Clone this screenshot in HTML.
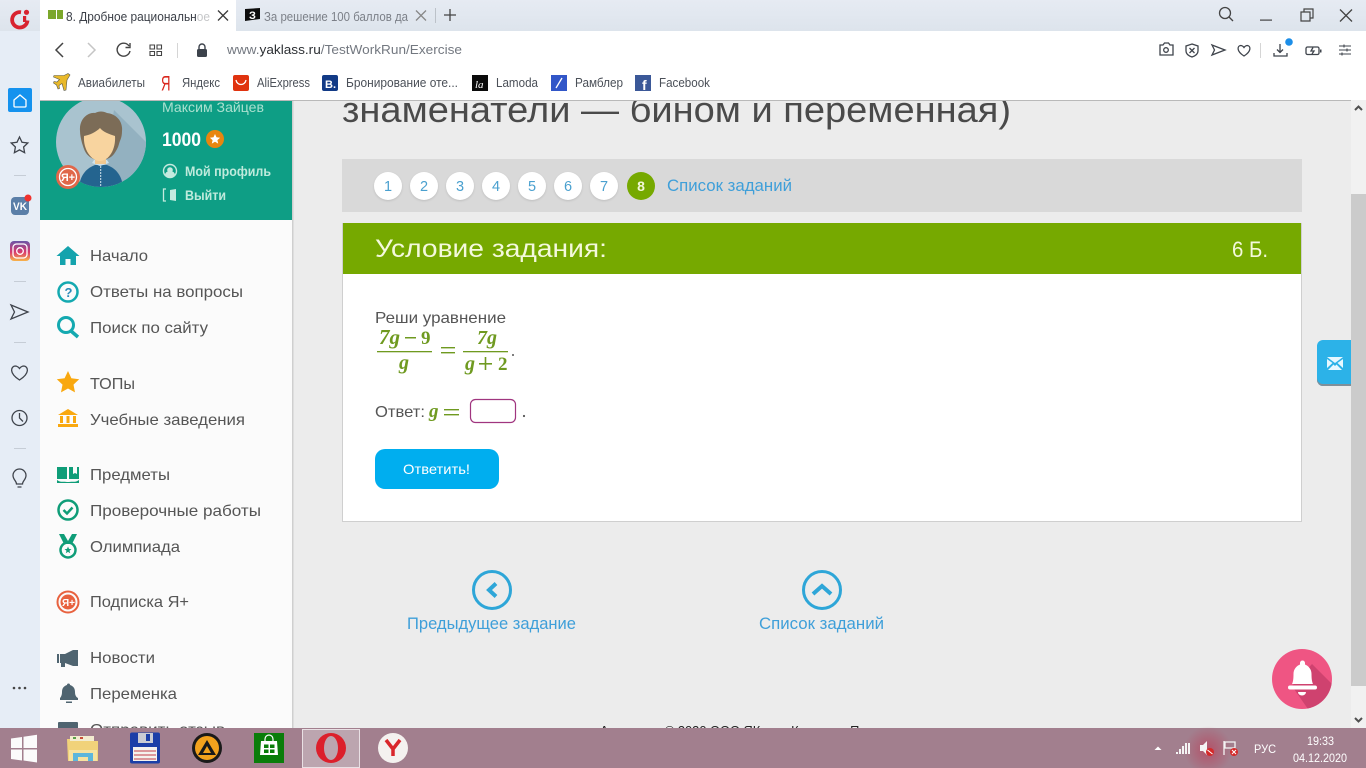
<!DOCTYPE html>
<html lang="ru"><head><meta charset="utf-8"><title>ЯКласс</title>
<style>
html,body{margin:0;padding:0;width:1366px;height:768px;overflow:hidden;background:#ececec}
svg{display:block}
text{font-family:"Liberation Sans","Noto Sans CJK SC",sans-serif;fill:#555;font-size:16px;white-space:pre}
.m{font-family:"Liberation Serif",serif;font-style:italic;font-weight:bold;fill:#6f9a20;font-size:20px}
.mu{font-family:"Liberation Serif",serif;font-weight:bold;fill:#6f9a20;font-size:19px}
.c{font-size:12.5px;fill:#4b5058}
.t{font-size:12px;fill:#fff}
.n{font-size:14.5px;fill:#4aa0cf;text-anchor:middle}
.ln{fill:none;stroke:#3f444c;stroke-width:1.3}
</style></head><body>
<svg width="1366" height="768" viewBox="0 0 1366 768" xmlns="http://www.w3.org/2000/svg">
<defs>
<linearGradient id="tb" x1="0" y1="0" x2="0" y2="1"><stop offset="0" stop-color="#e6ebf3"/><stop offset="1" stop-color="#dde4ec"/></linearGradient>
<linearGradient id="ig" x1="0" y1="0" x2="0" y2="1"><stop offset="0" stop-color="#6a56a8"/><stop offset=".55" stop-color="#d8386e"/><stop offset="1" stop-color="#f8b44a"/></linearGradient>
<radialGradient id="glow"><stop offset="0" stop-color="#b8435c" stop-opacity=".75"/><stop offset="1" stop-color="#b8435c" stop-opacity="0"/></radialGradient>
<clipPath id="av"><circle cx="101" cy="142" r="45"/></clipPath>
<clipPath id="bell"><circle cx="1302" cy="679" r="30"/></clipPath>
</defs>

<!-- page -->
<rect x="40" y="100" width="1326" height="628" fill="#ececec"/>
<text x="342" y="122" textLength="669" lengthAdjust="spacingAndGlyphs" style="font-size:36px;fill:#4a4a4a">знаменатели — бином и переменная)</text>

<!-- number strip -->
<rect x="342" y="159" width="960" height="53" fill="#d9d9d9"/>
<g fill="#fff" style="filter:drop-shadow(0 1px 1px rgba(0,0,0,.12))">
<circle cx="388" cy="186" r="14"/><circle cx="424" cy="186" r="14"/><circle cx="460" cy="186" r="14"/><circle cx="496" cy="186" r="14"/><circle cx="532" cy="186" r="14"/><circle cx="568" cy="186" r="14"/><circle cx="604" cy="186" r="14"/>
</g>
<circle cx="641" cy="186" r="14" fill="#76a900"/>
<text class="n" x="388" y="191">1</text><text class="n" x="424" y="191">2</text><text class="n" x="460" y="191">3</text><text class="n" x="496" y="191">4</text><text class="n" x="532" y="191">5</text><text class="n" x="568" y="191">6</text><text class="n" x="604" y="191">7</text>
<text class="n" x="641" y="191" style="fill:#f2f8d8;font-weight:bold;font-size:14px">8</text>
<text x="667" y="191" textLength="125" lengthAdjust="spacingAndGlyphs" style="fill:#3f9fd9;font-size:16.5px">Список заданий</text>

<!-- card -->
<rect x="342.500" y="223.500" width="959" height="298" fill="#fff" stroke="#cfcfcf"/>
<rect x="343" y="223" width="958" height="51" fill="#76a900"/>
<text x="375" y="257" textLength="232" lengthAdjust="spacingAndGlyphs" style="font-size:25px;fill:#f4f9dc">Условие задания:</text>
<text x="1232" y="257" textLength="36" lengthAdjust="spacingAndGlyphs" style="font-size:22px;fill:#f4f9dc">6 Б.</text>
<text x="375" y="323" textLength="131" lengthAdjust="spacingAndGlyphs" style="fill:#555">Реши уравнение</text>

<text class="m" x="379" y="344" style="font-size:21px">7g</text>
<rect x="405" y="337" width="11" height="1.500" fill="#6f9a20"/>
<text class="mu" x="421" y="344">9</text>
<rect x="377" y="351" width="55" height="1.300" fill="#6f9a20"/>
<text class="m" x="399" y="369">g</text>
<rect x="441" y="347" width="14" height="1.400" fill="#6f9a20"/><rect x="441" y="352" width="14" height="1.400" fill="#6f9a20"/>
<text class="m" x="477" y="344" style="font-size:20px">7g</text>
<rect x="463" y="351" width="45" height="1.300" fill="#6f9a20"/>
<text class="m" x="465" y="370">g</text>
<rect x="479" y="363" width="13" height="1.600" fill="#6f9a20"/><rect x="484.700" y="357" width="1.600" height="13" fill="#6f9a20"/>
<text class="mu" x="498" y="370">2</text>
<circle cx="513" cy="355" r="1" fill="#555"/>

<text x="375" y="417" textLength="50" lengthAdjust="spacingAndGlyphs">Ответ:</text>
<text class="m" x="429" y="417" style="font-size:19px">g</text>
<rect x="444" y="409" width="15" height="1.400" fill="#6f9a20"/><rect x="444" y="414" width="15" height="1.400" fill="#6f9a20"/>
<rect x="470.500" y="399.500" width="45" height="23" rx="5" fill="#fff" stroke="#a0357f" stroke-width="1.200"/>
<circle cx="524" cy="416" r="1.100" fill="#555"/>

<rect x="375" y="449" width="124" height="40" rx="10" fill="#00aeef"/>
<text x="403" y="474" textLength="67" lengthAdjust="spacingAndGlyphs" style="font-size:14px;fill:#fff">Ответить!</text>

<!-- prev/list -->
<circle cx="492" cy="590" r="18.500" fill="none" stroke="#2ea6d8" stroke-width="3"/>
<path d="M496 583.500l-7 6.500 7 6.500" fill="none" stroke="#2ea6d8" stroke-width="4"/>
<text x="407" y="629" textLength="169" lengthAdjust="spacingAndGlyphs" style="fill:#3f9fd9;font-size:16.5px">Предыдущее задание</text>
<circle cx="822" cy="590" r="18.500" fill="none" stroke="#2ea6d8" stroke-width="3"/>
<path d="M813 594l9-8 9 8" fill="none" stroke="#2ea6d8" stroke-width="4"/>
<text x="759" y="629" textLength="125" lengthAdjust="spacingAndGlyphs" style="fill:#3f9fd9;font-size:16.5px">Список заданий</text>
<text x="600" y="735" textLength="300" lengthAdjust="spacingAndGlyphs" style="fill:#222;font-size:13px">Авторские © 2020 ООО ЯКласс Контакты Пользов</text>

<!-- scrollbar -->
<rect x="1351" y="100" width="15" height="628" fill="#f1f1f1"/>
<rect x="1351" y="194" width="15" height="492" fill="#cbcbcb"/>
<path d="M1355 110l3.500-3.500 3.500 3.500M1355 718l3.500 3.500 3.500-3.500" fill="none" stroke="#505050" stroke-width="2"/>

<!-- mail -->
<path d="M1323 340h28v46h-28a6 6 0 0 1-6-6v-34a6 6 0 0 1 6-6z" fill="#2cb2e8"/>
<path d="M1317 378v2a6 6 0 0 0 6 6h28v-2h-28a6 6 0 0 1-6-6z" fill="#7f8f99"/>
<path d="M1327 357h16l-8 6zM1327 359l5.500 4-5.500 5zM1343 359l-5.500 4 5.500 5zM1328 370l5.500-5.500 1.500 1.500 1.500-1.500 5.500 5.500z" fill="#e8f8ff"/>

<!-- bell -->
<circle cx="1302" cy="679" r="30" fill="#ef5583"/>
<path d="M1292 686l20-22 24 24-16 24-10 0z" fill="#c23a66" opacity=".7" clip-path="url(#bell)"/>
<path d="M1292 684c1-2 1.500-5 1.500-10 0-5 3-8 6.500-9.500v-1.500a2.500 2.500 0 0 1 5 0v1.500c3.500 1.500 6.500 4.500 6.500 9.500 0 5 .5 8 1.500 10z" fill="#fff"/>
<rect x="1288" y="685.500" width="29" height="4" rx="2" fill="#fff"/>
<path d="M1298 692h8a4 3.500 0 0 1-8 0z" fill="#fff"/>

<!-- left panel -->
<rect x="40" y="100" width="252" height="628" fill="#fbfbfb"/>
<rect x="292" y="100" width="1.500" height="628" fill="#cfcfcf"/>
<rect x="40" y="100" width="252" height="120" fill="#0e9e85"/>
<circle cx="101" cy="142" r="45" fill="#a9c3cf"/>
<g clip-path="url(#av)">
<path d="M114 110l40 40-26 44-28-4z" fill="#93b1c0"/>
<path d="M79 190c0-15 8-22 16-25h12c8 3 16 10 16 25z" fill="#24648f"/>
<path d="M100.700 163v27" stroke="#d3e4ec" stroke-width="1" stroke-dasharray="2 1"/>
<path d="M92 163l8 3 9-3-2-3h-13z" fill="#cfe2ea"/>
<path d="M80 131c-1-12 8-19 15-18 4-2 8-2 12 0 9 1 16 8 15 18 0 7-2 9-3 13-1 4-3 7-5 10-3 4-8 6-14 6-7 0-11-3-14-7-2-3-3-7-4-10-1-4-2-8-2-12z" fill="#7c6c57"/>
<rect x="95" y="155" width="11" height="9" fill="#f0c890"/>
<path d="M84 136c6-1 12-4 16-8 3 4 9 6 15 8 1 13-6 25-15 25-9 0-17-12-16-25z" fill="#f8d49f"/>
</g>
<circle cx="68" cy="177" r="12" fill="#e0674a"/>
<circle cx="68" cy="177" r="8.500" fill="none" stroke="#fff" stroke-width="1.300"/>
<text x="61" y="181" textLength="14" lengthAdjust="spacingAndGlyphs" style="font-size:11px;fill:#fff;font-weight:bold">Я+</text>

<text x="162" y="112" textLength="102" lengthAdjust="spacingAndGlyphs" style="font-size:14px;fill:#a9e0cf">Максим Зайцев</text>
<text x="162" y="146" textLength="39" lengthAdjust="spacingAndGlyphs" style="font-size:19px;fill:#fff;font-weight:bold">1000</text>
<circle cx="215" cy="139" r="9" fill="#e8860f"/>
<path d="M215 134l1.500 3.300 3.600.4-2.700 2.400.8 3.500-3.200-1.800-3.200 1.800.8-3.500-2.700-2.400 3.600-.4z" fill="#fff"/>
<circle cx="170" cy="171" r="6.500" fill="none" stroke="#c5eadf" stroke-width="1.400"/><circle cx="170" cy="170" r="2.800" fill="#c5eadf"/><path d="M165 175a5 4 0 0 1 10 0l-2 2h-6z" fill="#c5eadf"/>
<text x="185" y="176" textLength="86" lengthAdjust="spacingAndGlyphs" style="font-size:14px;fill:#bfeadc;font-weight:bold">Мой профиль</text>
<path d="M166 189h-2.500v12h2.500" fill="none" stroke="#c5eadf" stroke-width="1.300"/><path d="M170 190l6-1v12l-6-1z" fill="#c5eadf"/>
<text x="185" y="200" textLength="41" lengthAdjust="spacingAndGlyphs" style="font-size:14px;fill:#bfeadc;font-weight:bold">Выйти</text>

<!-- menu -->
<text x="90" y="261" textLength="58" lengthAdjust="spacingAndGlyphs">Начало</text>
<text x="90" y="297" textLength="153" lengthAdjust="spacingAndGlyphs">Ответы на вопросы</text>
<text x="90" y="333" textLength="118" lengthAdjust="spacingAndGlyphs">Поиск по сайту</text>
<text x="90" y="389" textLength="45" lengthAdjust="spacingAndGlyphs">ТОПы</text>
<text x="90" y="425" textLength="155" lengthAdjust="spacingAndGlyphs">Учебные заведения</text>
<text x="90" y="480" textLength="80" lengthAdjust="spacingAndGlyphs">Предметы</text>
<text x="90" y="516" textLength="171" lengthAdjust="spacingAndGlyphs">Проверочные работы</text>
<text x="90" y="552" textLength="90" lengthAdjust="spacingAndGlyphs">Олимпиада</text>
<text x="90" y="607" textLength="99" lengthAdjust="spacingAndGlyphs">Подписка Я+</text>
<text x="90" y="663" textLength="65" lengthAdjust="spacingAndGlyphs">Новости</text>
<text x="90" y="699" textLength="87" lengthAdjust="spacingAndGlyphs">Переменка</text>
<text x="90" y="735" textLength="135" lengthAdjust="spacingAndGlyphs">Отправить отзыв</text>

<path d="M68 246l11.500 10h-3.500v9h-5.500v-6h-5v6h-5.500v-9h-3.500z" fill="#14a3ad"/>
<circle cx="68" cy="292" r="9.500" fill="none" stroke="#14a9b0" stroke-width="2.500"/>
<text x="64.500" y="297" style="font-size:13px;font-weight:bold;fill:#2a8ab8">?</text>
<circle cx="66" cy="325" r="7.500" fill="none" stroke="#14a9b0" stroke-width="3"/><path d="M71 331l7 6" stroke="#14a9b0" stroke-width="3.500" fill="none"/>
<path d="M68 371l3.400 7.200 7.800 1-5.700 5.400 1.500 7.800-7-3.900-7 3.900 1.500-7.800-5.700-5.400 7.800-1z" fill="#f9a80f"/>
<path d="M68 409l10 6h-20zM60 416h3v7h-3zM66.500 416h3v7h-3zM73 416h3v7h-3z" fill="#f9a80f"/><rect x="58" y="424" width="20" height="3" fill="#f9a80f"/>
<path d="M57 467h10v12h-10zM69 467h4v7l2-1 2 1v-7h2v12h-10z" fill="#0f9d78"/><path d="M57 480c4 3 7 1 10 2h2c3-1 6 1 10-2v3h-22z" fill="#0f9d78"/>
<circle cx="68" cy="510" r="9.500" fill="none" stroke="#0f9d78" stroke-width="2.500"/><path d="M63.500 510l3.500 3.500 5.500-6" fill="none" stroke="#0f9d78" stroke-width="2.500"/>
<path d="M59 534h5l4 7 4-7h5l-5 10h-8z" fill="#0f9d78"/><circle cx="68" cy="550" r="7.500" fill="none" stroke="#0f9d78" stroke-width="2.500"/>
<path d="M68 546.500l1 2.400 2.500.2-2 1.600.7 2.500-2.200-1.300-2.200 1.300.7-2.500-2-1.600 2.500-.2z" fill="#0f9d78"/>
<circle cx="68" cy="602" r="10.500" fill="none" stroke="#e8623f" stroke-width="2"/><circle cx="68" cy="602" r="7.500" fill="#e8623f"/>
<text x="62" y="606" textLength="13" lengthAdjust="spacingAndGlyphs" style="font-size:10px;fill:#fff;font-weight:bold">Я+</text>
<path d="M57 654h2v9h-2zM60 654h5l8-4h5v16h-5l-8-3v4h-4v-4h-1z" fill="#4f6470"/>
<path d="M60 698c1-1 2-3 2-6 0-4 2-6 5-7a1.500 1.500 0 0 1 3 0c3 1 5 3 5 7 0 3 1 5 3 6v2h-18z" fill="#4f6470"/><rect x="66" y="701.500" width="6" height="1.500" fill="#4f6470"/>
<rect x="58" y="722" width="20" height="10" rx="1" fill="#4f6470"/>

<!-- browser chrome -->
<rect x="40" y="31" width="1326" height="69" fill="#fff"/>
<rect x="40" y="100" width="1311" height="1" fill="#b9b9b9"/>
<rect x="0" y="0" width="1366" height="31" fill="url(#tb)"/>
<rect x="40" y="0" width="196" height="31" fill="#fff"/>
<rect x="0" y="31" width="40" height="697" fill="#e6edf6"/>

<path d="M21 12.200A7.700 7.700 0 1 0 27.500 20.500" fill="none" stroke="#d8232f" stroke-width="3.800"/>
<rect x="23" y="16" width="3.200" height="6" fill="#d8232f"/>
<circle cx="26.500" cy="12.300" r="2.600" fill="#d8232f"/>

<rect x="48" y="10" width="8" height="9" fill="#7ba72b"/><rect x="57" y="10" width="6" height="9" fill="#7ba72b"/>
<text x="66" y="21" textLength="144" lengthAdjust="spacingAndGlyphs" style="font-size:12.500px;fill:#3c4048">8. Дробное рациональное</text>
<rect x="196" y="8" width="14" height="16" fill="#fff" opacity=".7"/>
<path d="M218 10.500l10 10m0-10l-10 10" stroke="#3a3a3a" stroke-width="1.300"/>
<path d="M245 9l15-1v11l-15 2z" fill="#0d0d0d"/><text x="249" y="19" style="font-size:11px;font-weight:bold;fill:#fff">З</text>
<text x="264" y="21" textLength="144" lengthAdjust="spacingAndGlyphs" style="font-size:12.500px;fill:#7c8088">За решение 100 баллов да</text>
<path d="M416 10.500l10 10m0-10l-10 10" stroke="#888" stroke-width="1.300"/>
<rect x="435" y="8" width="1" height="15" fill="#bcc2c9"/>
<path d="M450 9v12M444 15h12" stroke="#444" stroke-width="1.300"/>

<circle cx="1225" cy="13" r="5.500" fill="none" stroke="#444" stroke-width="1.300"/><path d="M1229 17l4 4" stroke="#444" stroke-width="1.300"/>
<rect x="1260" y="19.500" width="12" height="1.200" fill="#444"/>
<path d="M1301 12h9v9h-9zM1304 12v-3h9v9h-3" fill="none" stroke="#444" stroke-width="1.200"/>
<path d="M1340 9.500l12 12m0-12l-12 12" stroke="#444" stroke-width="1.300"/>

<path d="M63 43l-7 7 7 7" fill="none" stroke="#444" stroke-width="1.500"/>
<path d="M88 43l7 7-7 7" fill="none" stroke="#c5c5c5" stroke-width="1.500"/>
<path d="M129 46a6.500 6.500 0 1 0 1 5M130 43v4.500h-4.500" fill="none" stroke="#444" stroke-width="1.400"/>
<path d="M150 45h4.500v4H150zM157 45h4.500v4H157zM150 51.500h4.500v4H150zM157 51.500h4.500v4H157z" fill="none" stroke="#444" stroke-width="1.100"/>
<rect x="177" y="43" width="1" height="15" fill="#d5d5d5"/>
<rect x="197" y="49" width="10" height="8" rx="1.500" fill="#3c424b"/><path d="M199 49v-2a3 3 0 0 1 6 0v2" fill="none" stroke="#3c424b" stroke-width="1.400"/>
<text x="227" y="54" textLength="235" lengthAdjust="spacingAndGlyphs" style="font-size:13px;fill:#737880">www.<tspan fill="#2c2f33">yaklass.ru</tspan>/TestWorkRun/Exercise</text>

<path d="M1160 45h3l1.500-2h4l1.500 2h3v10h-13z" class="ln"/><circle cx="1166" cy="50" r="2.300" class="ln"/>
<path d="M1192 44l6 2v5c0 3-3 5-6 6-3-1-6-3-6-6v-5zM1189.500 48l5 5m0-5l-5 5" class="ln"/>
<path d="M1212 45l13 5-13 5 2.500-5z" class="ln"/>
<path d="M1244 56c-8-5-6.500-10-3.500-10.500 1.500 0 2.800 1 3.500 2 .7-1 2-2 3.500-2 3 .5 4.500 5.500-3.500 10.500z" class="ln"/>
<rect x="1260" y="43" width="1" height="15" fill="#d5d5d5"/>
<path d="M1280 44v8M1277 49.500l3 3 3-3M1274 53v3h13v-3" class="ln"/>
<circle cx="1289" cy="42" r="3.800" fill="#1c8ee8"/>
<rect x="1306" y="47" width="13" height="7.500" rx="1.500" class="ln"/><rect x="1320" y="49.500" width="1.500" height="3" fill="#3f444c"/><path d="M1313 47.500l-2 3.500h3l-2 3" class="ln"/>
<path d="M1339 46h12M1339 50h12M1339 54h12M1344 44.500v3M1347 48.500v3M1342 52.500v3" fill="none" stroke="#3f444c" stroke-width="1.100"/>

<!-- bookmarks -->
<path d="M70 75l-3 5-1 10-2 .5-2-7-3 2 .5 3-1.500.5-1.500-4-3-2 .5-1.500 3 .5 2.500-2.500-6-2.500.5-1.500 10 0 4-2z" fill="#e9b92a" stroke="#5a5a4a" stroke-width=".6"/>
<text class="c" x="78" y="87" textLength="67" lengthAdjust="spacingAndGlyphs">Авиабилеты</text>
<text x="161" y="90.500" textLength="9.500" lengthAdjust="spacingAndGlyphs" style="font-size:21px;fill:#d9261c">Я</text>
<text class="c" x="182" y="87" textLength="38" lengthAdjust="spacingAndGlyphs">Яндекс</text>
<rect x="233" y="75" width="16" height="16" rx="2" fill="#e0330f"/><path d="M236 80c1 6 9 6 10 0" fill="none" stroke="#fff" stroke-width="1.300"/>
<text class="c" x="257" y="87" textLength="53" lengthAdjust="spacingAndGlyphs">AliExpress</text>
<rect x="322" y="75" width="16" height="16" rx="2" fill="#123a86"/><text x="325" y="88" style="font-size:11px;font-weight:bold;fill:#fff">B.</text>
<text class="c" x="346" y="87" textLength="112" lengthAdjust="spacingAndGlyphs">Бронирование оте...</text>
<rect x="472" y="75" width="16" height="16" fill="#0b0b0b"/><text x="475" y="88" style="font-size:11px;font-style:italic;font-family:'Liberation Serif',serif;fill:#fff">la</text>
<text class="c" x="496" y="87" textLength="42" lengthAdjust="spacingAndGlyphs">Lamoda</text>
<rect x="551" y="75" width="16" height="16" fill="#3156c8"/><path d="M556 88l6-10" stroke="#fff" stroke-width="1.300"/>
<text class="c" x="575" y="87" textLength="48" lengthAdjust="spacingAndGlyphs">Рамблер</text>
<rect x="635" y="75" width="16" height="16" fill="#3b5898"/><text x="642" y="90" style="font-size:14px;font-weight:bold;fill:#fff">f</text>
<text class="c" x="659" y="87" textLength="51" lengthAdjust="spacingAndGlyphs">Facebook</text>

<!-- opera sidebar -->
<rect x="8" y="88" width="24" height="24" rx="2" fill="#1592ee"/>
<path d="M14 100l6-5 6 5v6a1 1 0 0 1-1 1H15a1 1 0 0 1-1-1z" fill="none" stroke="#fff" stroke-width="1.300"/>
<path d="M19.500 137l2.500 5.300 5.800.7-4.200 4 1 5.700-5.100-2.800-5.100 2.800 1-5.700-4.200-4 5.800-.7z" class="ln"/>
<rect x="14" y="175" width="12" height="1" fill="#c6cdd6"/>
<rect x="11" y="197" width="18" height="18" rx="4" fill="#5b7fa8"/><text x="13" y="210" textLength="14" lengthAdjust="spacingAndGlyphs" style="font-size:11px;font-weight:bold;fill:#fff">VK</text>
<circle cx="28" cy="198" r="3.500" fill="#f0322d"/>
<rect x="10" y="241" width="20" height="20" rx="4" fill="url(#ig)"/>
<rect x="13" y="244" width="14" height="14" rx="3.500" fill="none" stroke="#fff" stroke-width="1.300"/><circle cx="20" cy="251" r="3.300" fill="none" stroke="#fff" stroke-width="1.300"/>
<rect x="14" y="281" width="12" height="1" fill="#c6cdd6"/>
<path d="M11 305l17 7-17 7 3.500-7z" class="ln"/>
<rect x="14" y="342" width="12" height="1" fill="#c6cdd6"/>
<path d="M19.500 380c-11-7-8.500-13.500-4.500-14 2 0 3.500 1.200 4.500 2.500 1-1.300 2.500-2.500 4.500-2.500 4 .5 6.500 7-4.500 14z" class="ln"/>
<circle cx="19.500" cy="418" r="7.500" class="ln"/><path d="M19.500 413v5l3.500 3.500" class="ln"/>
<rect x="14" y="448" width="12" height="1" fill="#c6cdd6"/>
<path d="M16.500 484c0-3-3.500-4.500-3.500-8.500a6.500 6.500 0 0 1 13 0c0 4-3.500 5.500-3.500 8.500zM17.500 487h4" class="ln"/>
<circle cx="14" cy="688" r="1.300" fill="#444"/><circle cx="19.500" cy="688" r="1.300" fill="#444"/><circle cx="25" cy="688" r="1.300" fill="#444"/>

<!-- taskbar -->
<rect x="0" y="728" width="1366" height="40" fill="#a27f8e"/>
<circle cx="1208" cy="750" r="24" fill="url(#glow)"/>
<path d="M11 738.500l11-1.500v11H11zM23.500 736.800l13.500-2v13.200H23.500zM11 749.500h11v11l-11-1.500zM23.500 749.500H37v13l-13.500-2z" fill="#fbfbfb"/>

<path d="M67 739h13l2 2h16v20H68z" fill="#f1d27a"/><rect x="70" y="736" width="24" height="5" fill="#f3ecd0"/>
<rect x="73" y="737" width="3" height="2" fill="#5aa04a"/><rect x="80" y="737" width="3" height="2" fill="#c9503a"/>
<path d="M69 750h28v11H69z" fill="#f7e2a0"/><path d="M73 761v-8h20v8h-5v-4h-10v4z" fill="#5db6dc"/>
<rect x="130" y="732.500" width="30" height="31" rx="2" fill="#1b3fa8"/><rect x="138" y="733" width="15" height="10" fill="#c9ccd4"/><rect x="146" y="734" width="4" height="7" fill="#1b3fa8"/>
<rect x="133" y="747" width="24" height="14" fill="#f4f2ee"/><path d="M134 751h22M134 755h22M134 759h22" stroke="#c23c48" stroke-width="1"/>
<circle cx="207" cy="748" r="15" fill="#1a1a1a"/><circle cx="207" cy="748" r="12" fill="#f3a21d"/>
<path d="M207 740l9 15h-18z" fill="#1a1a1a"/><path d="M207 746l4 7h-8z" fill="#f3a21d"/>
<rect x="254" y="733" width="30" height="30" fill="#0a7d0a"/>
<path d="M261 741h16l1 14h-18z" fill="#fff"/><path d="M265 741v-2a4 4 0 0 1 8 0v2" fill="none" stroke="#fff" stroke-width="1.200"/>
<path d="M264 744.500h4.500v3.500H264zM270 744.500h4.500v3.500H270zM264 749.500h4.500v3.500H264zM270 749.500h4.500v3.500H270z" fill="#0a7d0a"/>
<rect x="302.500" y="729.500" width="57" height="38" fill="#bca5af" stroke="#e9e0e4"/>
<ellipse cx="331" cy="748" rx="15" ry="15" fill="#dc1f2b"/>
<ellipse cx="331" cy="748" rx="7" ry="12" fill="#bca5af"/>
<circle cx="393" cy="748" r="15" fill="#f4f1ef"/>
<path d="M386 740l7 9v7M400 740l-7 9" fill="none" stroke="#d9262b" stroke-width="3.500"/>

<path d="M1154.500 750l3.500-3.500 3.500 3.500z" fill="#fff"/>
<path d="M1176 752h2v2h-2zM1179 749h2v5h-2zM1182 746h2v8h-2zM1185 743h2v11h-2zM1188 743h2v11h-2z" fill="#f4f4f4"/>
<path d="M1200 745h3l4-4v14l-4-4h-3z" fill="#f4f4f4"/><circle cx="1210" cy="752" r="4" fill="#d42a2a"/><path d="M1207.500 750l5 4" stroke="#fff"/>
<path d="M1224 741v14M1225 742h10v6h-10z" fill="none" stroke="#f4f4f4" stroke-width="1.300"/><circle cx="1234" cy="752" r="4" fill="#d42a2a"/><path d="M1232 750l4 4m0-4l-4 4" stroke="#fff"/>
<text class="t" x="1254" y="753" textLength="22" lengthAdjust="spacingAndGlyphs">РУС</text>
<text class="t" x="1307" y="745" textLength="27" lengthAdjust="spacingAndGlyphs">19:33</text>
<text class="t" x="1293" y="762" textLength="54" lengthAdjust="spacingAndGlyphs">04.12.2020</text>
</svg>
</body></html>
